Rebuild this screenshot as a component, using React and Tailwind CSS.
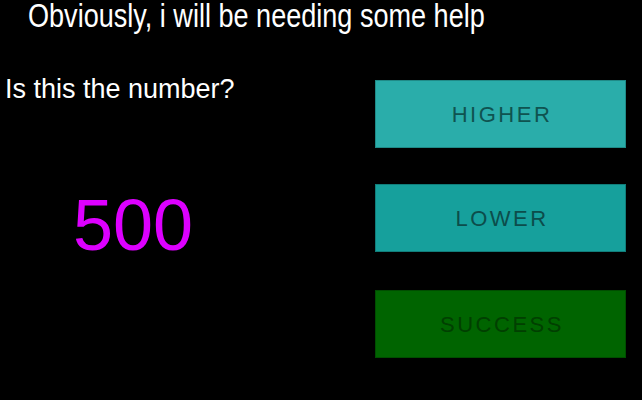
import React from 'react';

const buttons = [
  { label: 'HIGHER', cls: 'bg-[#2aadaa] border-[#1f8a87] text-[#0f5350]' },
  { label: 'LOWER', cls: 'mt-[36px] bg-[#16a09c] border-[#117d7a] text-[#0c4d4b]' },
  { label: 'SUCCESS', cls: 'mt-[38px] bg-[#006400] border-[#004d00] text-[#013f01]' },
];

const App = () => {
  return (
    <div className="w-[642px] h-[400px] bg-black text-white font-['Liberation_Sans',Arial,sans-serif] overflow-hidden">
      <h1 className="pl-[28px] text-[33px] leading-[32px] whitespace-nowrap">
        <span className="inline-block origin-left scale-x-[0.82]">Obviously, i will be needing some help</span>
      </h1>
      <div className="flex mt-[44px]">
        <div className="w-[370px]">
          <p className="pl-[5px] text-[27px] leading-[27px]">Is this the number?</p>
          <div className="pl-[73px] mt-[86px] text-[72px] leading-[72px] text-[#dd00ff]">500</div>
        </div>
        <div className="flex flex-col pl-[5px] pt-[4px]">
          {buttons.map((b) => (
            <button
              key={b.label}
              className={`w-[251px] h-[68px] border text-[22px] tracking-[2.5px] pl-[3px] ${b.cls}`}
            >
              {b.label}
            </button>
          ))}
        </div>
      </div>
    </div>
  );
};

export default App;
